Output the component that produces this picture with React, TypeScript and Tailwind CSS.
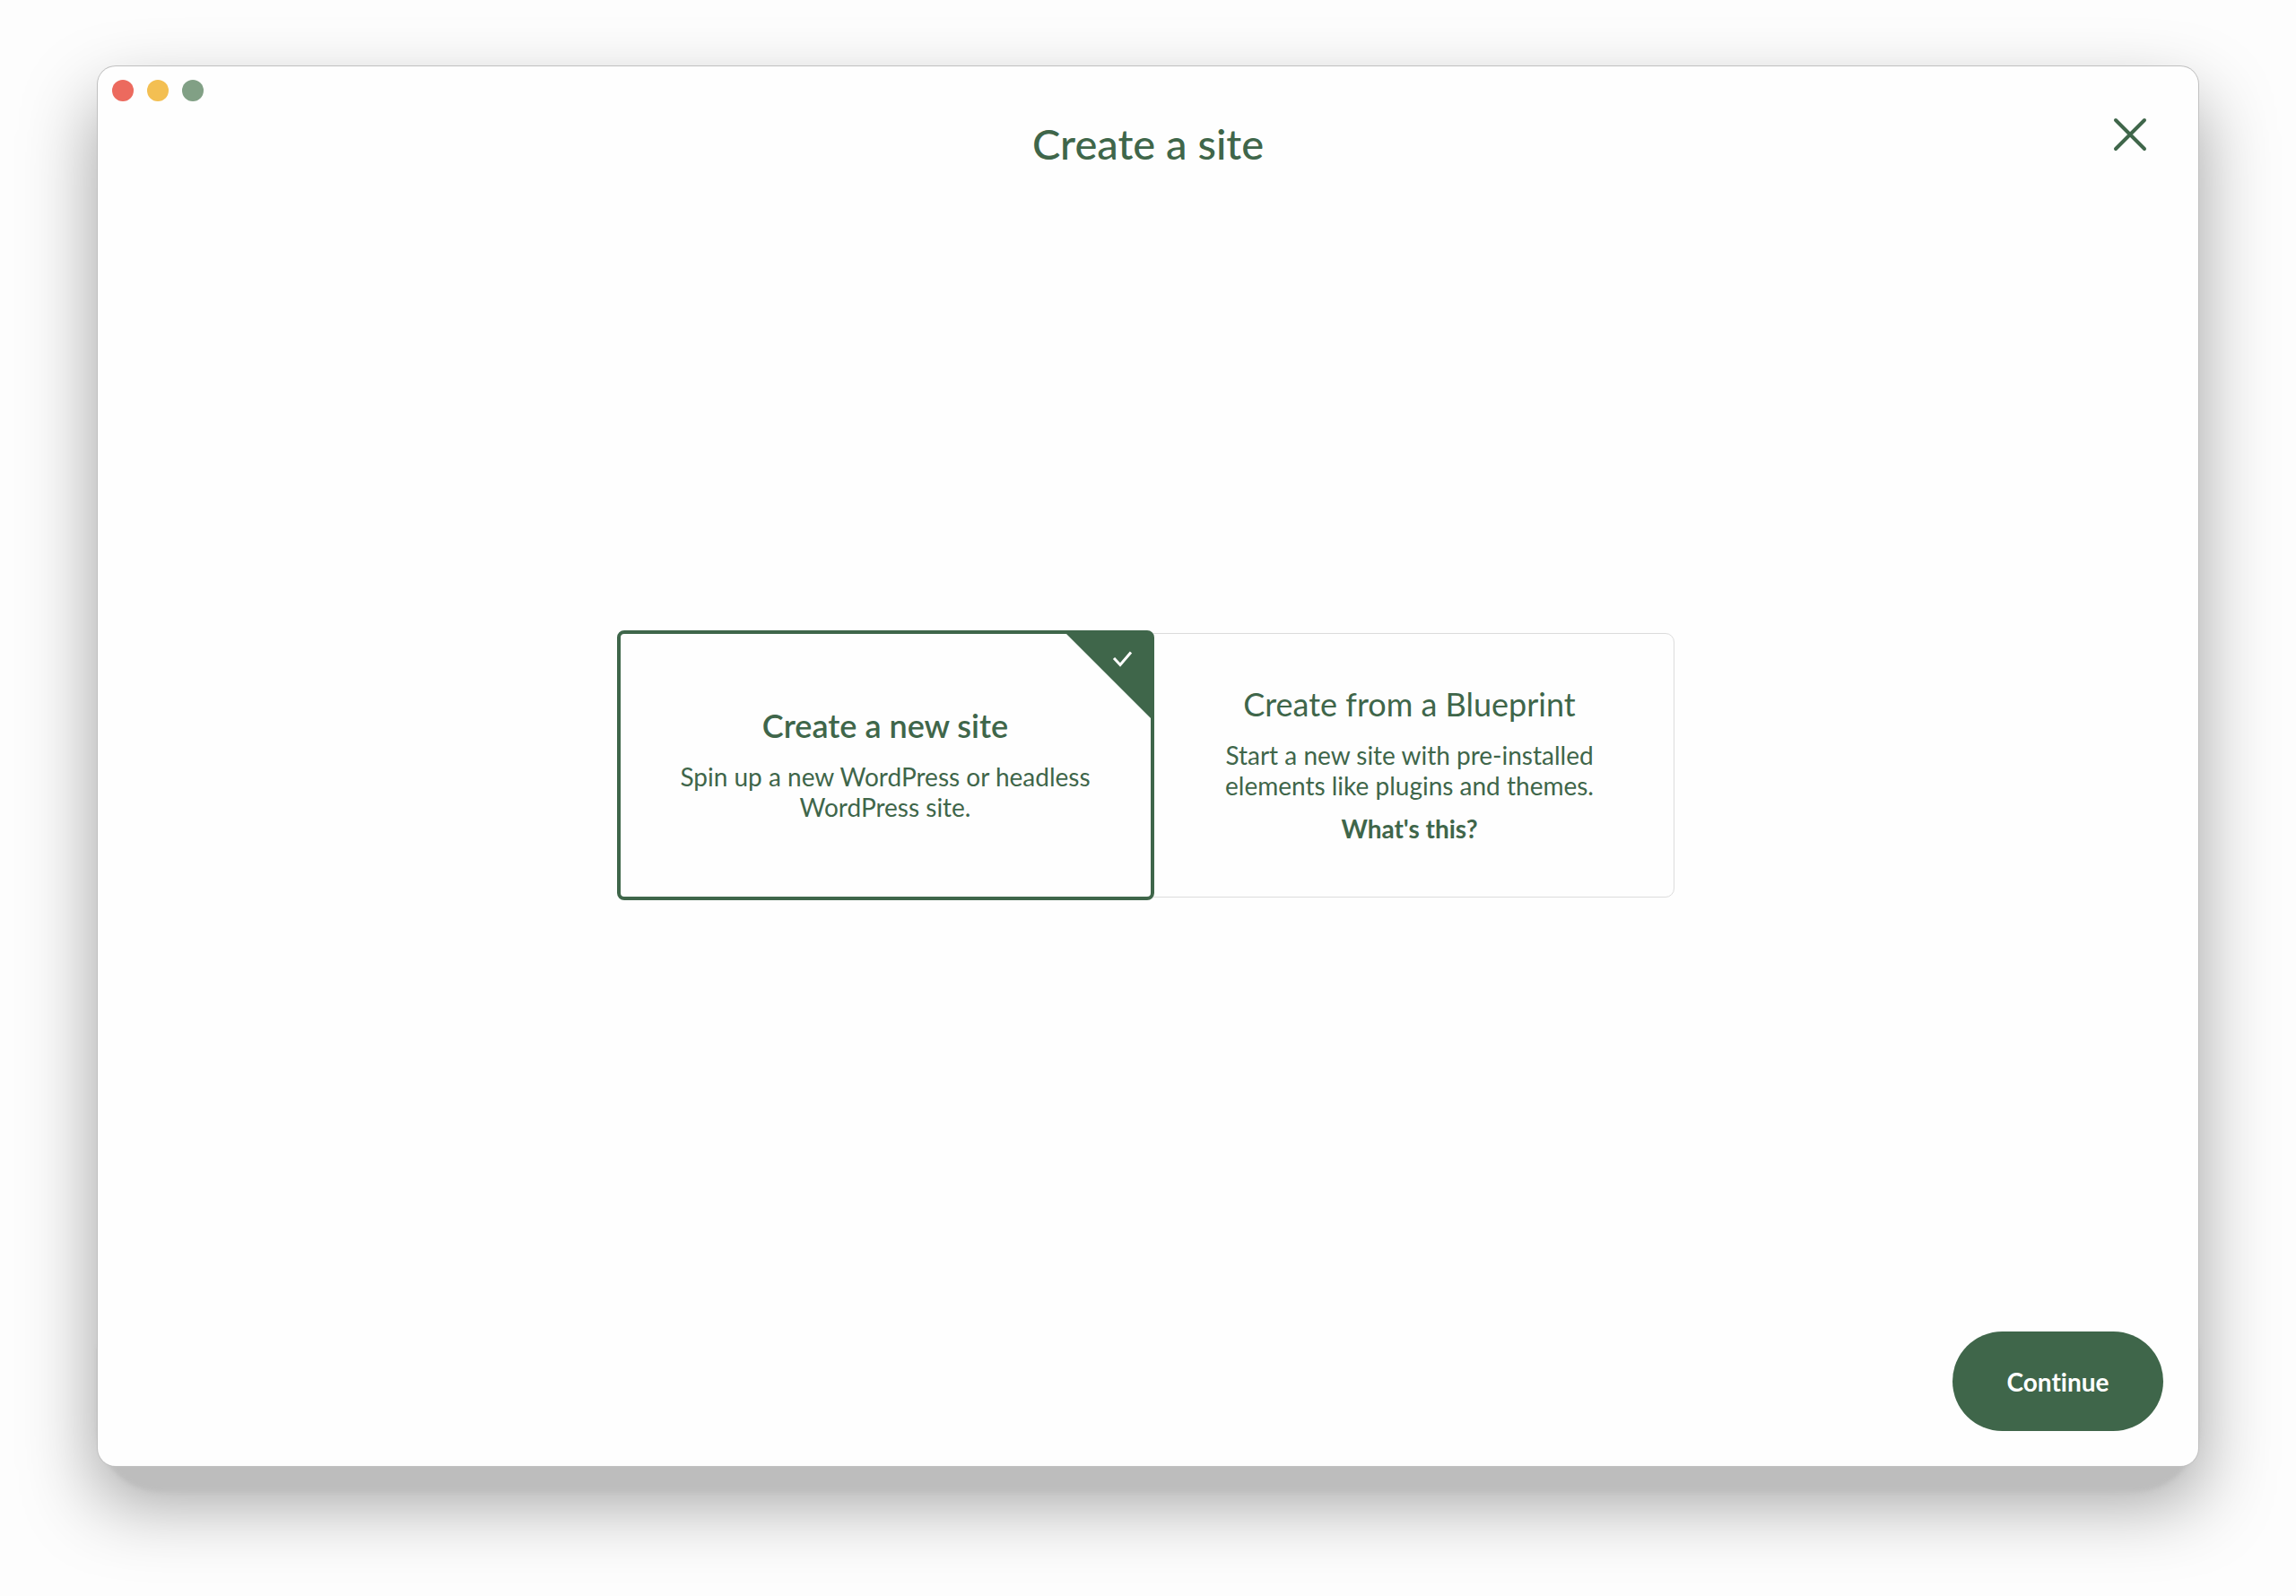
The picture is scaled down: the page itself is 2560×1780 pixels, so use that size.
import React, { useState } from "react";

type Option = {
  id: string;
  title: string;
  text: string;
  textWidth: string;
  link?: string;
};

const options: Option[] = [
  {
    id: "new",
    title: "Create a new site",
    text: "Spin up a new WordPress or headless WordPress site.",
    textWidth: "max-w-[480px]",
  },
  {
    id: "blueprint",
    title: "Create from a Blueprint",
    text: "Start a new site with pre-installed elements like plugins and themes.",
    textWidth: "max-w-[440px]",
    link: "What's this?",
  },
];

function Corner() {
  return (
    <svg
      aria-hidden="true"
      viewBox="0 0 98 98"
      className="absolute -top-px -right-px size-[98px]"
    >
      <path d="M2 0H98V96Z" fill="#3f664a" />
      <path d="M56 28L63 35.5L75 21.5" fill="none" stroke="#fff" strokeWidth="3" />
    </svg>
  );
}

function Card({
  option,
  selected,
  onSelect,
}: {
  option: Option;
  selected: boolean;
  onSelect: () => void;
}) {
  return (
    <div
      className={
        selected
          ? "relative z-10 flex h-[301px] w-[599px] flex-col items-center justify-center rounded-lg border-4 border-[#3f664a] bg-[#fefefe] pb-1.5 text-center"
          : "relative -ml-2.5 flex h-[295px] w-[590px] flex-col items-center justify-center rounded-[10px] border border-[#dcdcdc] pb-1.5 text-center"
      }
    >
      <label className="flex cursor-pointer flex-col items-center gap-4">
        <input
          type="radio"
          name="site-type"
          className="sr-only"
          checked={selected}
          onChange={onSelect}
        />
        <span
          className={
            selected
              ? "text-[36px] leading-[48px] font-semibold"
              : "text-[36px] leading-[48px] font-normal"
          }
        >
          {option.title}
        </span>
        <span className={`${option.textWidth} text-[28px] leading-[34px]`}>{option.text}</span>
      </label>
      {option.link && (
        <a href="#blueprints" className="mt-3.5 text-[28px] leading-[34px] font-bold">
          {option.link}
        </a>
      )}
      {selected && <Corner />}
    </div>
  );
}

export default function App() {
  const [choice, setChoice] = useState("new");
  return (
    <div className="flex min-h-screen flex-col bg-[#fdfdfd] px-[109px] pt-[74px] pb-[145px] font-['Lato',sans-serif] text-[#3f664a] [font-variant-ligatures:none]">
      <div className="relative isolate flex grow flex-col">
        <div
          aria-hidden="true"
          className="absolute inset-x-0 -bottom-[28px] -z-10 h-40 rounded-b-[70px] bg-[#bdbdbd] blur-[2px]"
        />
        <div
          aria-hidden="true"
          className="absolute inset-0 -z-20 rounded-[20px] shadow-[0_38px_84px_rgba(0,0,0,0.38)]"
        />
        <main className="flex grow flex-col rounded-[20px] bg-[#fefefe] shadow-[0_0_0_1px_#c0c0c0]">
          <header className="grid grid-cols-[1fr_auto_1fr] pb-8">
            <div className="flex gap-[15px] pt-[15px] pl-4">
              <button aria-label="Close window" className="size-6 rounded-full bg-[#ec6a5e]" />
              <button aria-label="Minimize window" className="size-6 rounded-full bg-[#f3bf52]" />
              <button aria-label="Zoom window" className="size-6 rounded-full bg-[#81a085]" />
            </div>
            <h1 className="pt-14 text-[47px] leading-[60px] font-medium">Create a site</h1>
            <button aria-label="Close" className="mt-[56px] mr-[56px] size-10 justify-self-end">
              <svg viewBox="0 0 40 40" className="size-10">
                <path
                  d="M4 4L36 36M36 4L4 36"
                  fill="none"
                  stroke="#3f664a"
                  strokeWidth="4"
                  strokeLinecap="round"
                />
              </svg>
            </button>
          </header>
          <div className="flex grow items-center justify-center pr-1.5">
            {options.map((o) => (
              <Card
                key={o.id}
                option={o}
                selected={choice === o.id}
                onSelect={() => setChoice(o.id)}
              />
            ))}
          </div>
          <footer className="flex justify-end pr-[39px] pb-[39px]">
            <button className="h-[111px] w-[235px] rounded-full bg-[#3f664a] text-[28px] font-bold text-white">
              Continue
            </button>
          </footer>
        </main>
      </div>
    </div>
  );
}
